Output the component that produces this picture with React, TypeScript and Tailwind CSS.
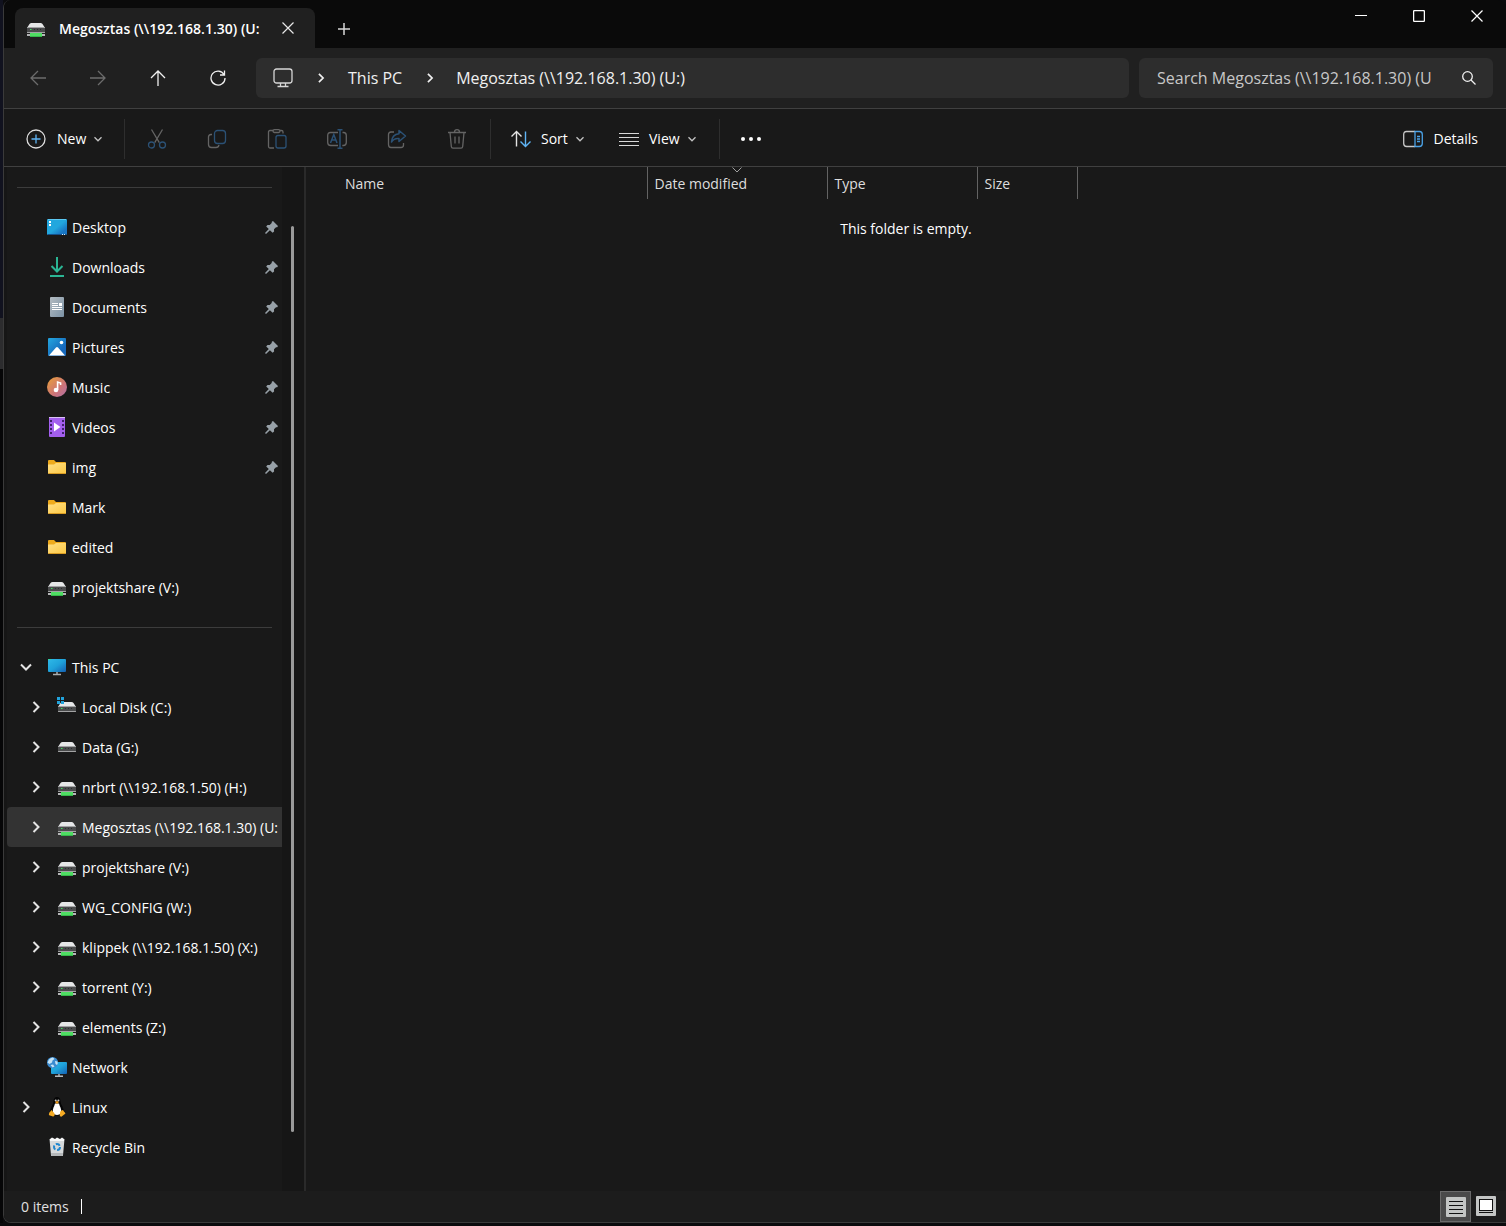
import React from 'react'

type IconType = React.FC

interface TreeItem {
  label: string
  icon: IconType
  pinned?: boolean
  child?: boolean
  caret?: 'open' | 'closed'
  selected?: boolean
}

/* ---------- Sidebar icons ---------- */

const DesktopIcon = () => (
  <svg viewBox="0 0 20 20" className="w-5 h-5">
    <defs>
      <linearGradient id="desk" x1="0" y1="0" x2="1" y2="1">
        <stop offset="0.5" stopColor="#22a7de" />
        <stop offset="0.8" stopColor="#1976c4" />
      </linearGradient>
    </defs>
    <rect x="0" y="2" width="20" height="16" rx="1" fill="url(#desk)" />
    <path d="M1 2.5h18" stroke="#5cc8f2" />
    <path d="M0.5 17.5h19" stroke="#14508a" />
    <path d="M2 4h2v2H2zM2 7h2v2H2z" fill="#fff" />
    <path d="M15 17h1v1h-1zM17 17h1v1h-1z" fill="#d5ecf9" />
  </svg>
)

const DownloadsIcon = () => (
  <svg viewBox="0 0 20 20" className="w-5 h-5" fill="none" stroke="#2bb594" strokeWidth="2">
    <path d="M10 0v14M4.5 9l5.5 5.5L15.5 9M3 19h14" />
  </svg>
)

const DocumentsIcon = () => (
  <svg viewBox="0 0 20 20" className="w-5 h-5">
    <defs>
      <linearGradient id="doc" x1="0" y1="0" x2="1" y2="1">
        <stop offset="0" stopColor="#b4bcc2" />
        <stop offset="1" stopColor="#7b92a5" />
      </linearGradient>
    </defs>
    <rect x="3" y="0" width="14" height="20" rx="1" fill="url(#doc)" />
    <path d="M5 6.5h6M5 8.5h6M5 10.5h10M5 12.5h10" stroke="#fff" />
    <rect x="12" y="6" width="3" height="3" fill="#fff" />
  </svg>
)

const PicturesIcon = () => (
  <svg viewBox="0 0 20 20" className="w-5 h-5">
    <defs>
      <linearGradient id="pic" x1="0" y1="0" x2="1" y2="1">
        <stop offset="0.1" stopColor="#229fdb" />
        <stop offset="0.7" stopColor="#1668bb" />
      </linearGradient>
    </defs>
    <rect x="1" y="1" width="18" height="18" rx="1" fill="url(#pic)" />
    <path d="M2 18.5l7-8q1-1 2 0l7 8z" fill="#fff" />
    <circle cx="14.5" cy="5.5" r="1.8" fill="#fff" />
  </svg>
)

const MusicIcon = () => (
  <svg viewBox="0 0 20 20" className="w-5 h-5">
    <defs>
      <linearGradient id="mus" x1="0" y1="0" x2="1" y2="1">
        <stop offset="0.1" stopColor="#e59a41" />
        <stop offset="0.6" stopColor="#cd7478" />
        <stop offset="1" stopColor="#b070a8" />
      </linearGradient>
    </defs>
    <circle cx="10" cy="10" r="10" fill="url(#mus)" />
    <circle cx="9" cy="13" r="2.3" fill="#fff" />
    <path d="M10.6 13V5l3 1v2" fill="none" stroke="#fff" strokeWidth="1.6" />
  </svg>
)

const VideosIcon = () => (
  <svg viewBox="0 0 20 20" className="w-5 h-5">
    <rect x="2" y="0" width="16" height="20" rx="1" fill="#a35fee" />
    <path d="M2 0.5h16" stroke="#d9c2f5" />
    <path d="M4 3v16M16 3v16" stroke="#40206c" strokeWidth="2" strokeDasharray="2 2" />
    <path d="M7 5.500v9l6.500-4.500z" fill="#fff" />
  </svg>
)

const FolderIcon = () => (
  <svg viewBox="0 0 20 20" className="w-5 h-5">
    <defs>
      <linearGradient id="fold" x1="0" y1="0" x2="1" y2="1">
        <stop offset="0" stopColor="#ffdf87" />
        <stop offset="1" stopColor="#fcc842" />
      </linearGradient>
    </defs>
    <path d="M1 4q0-1 1-1h5l2 2h9q1 0 1 1v3H1z" fill="#eeaa1c" />
    <path d="M1 7.500h6L9 6h10v10q0 1-1 1H2q-1 0-1-1z" fill="url(#fold)" />
    <path d="M1.500 16.500h17" stroke="#d99b22" />
  </svg>
)

const DriveBody = () => (
  <>
    <path d="M1 10l2.500-4q.7-1 2-1h9q1.300 0 2 1L19 10z" fill="#e6e7e8" />
    <rect x="1" y="9" width="18" height="6" rx="0.500" fill="#a2a3a4" />
    <rect x="1" y="10" width="18" height="4" fill="#4a4b4c" />
    <path d="M4 11.500h1.500" stroke="#3ce25b" />
    <path d="M8 11.500h8" stroke="#2b2c2d" strokeDasharray="1 2" />
  </>
)

const DriveIcon = () => (
  <svg viewBox="0 0 20 20" className="w-5 h-5">
    <DriveBody />
  </svg>
)

const SystemDriveIcon = () => (
  <svg viewBox="0 0 20 20" className="w-5 h-5">
    <DriveBody />
    <path d="M0 0h3v3H0zM4 0h3v3H4zM0 4h3v3H0zM4 4h3v3H4z" fill="#21a3dc" />
  </svg>
)

const NetDriveIcon = () => (
  <svg viewBox="0 0 20 20" className="w-5 h-5">
    <DriveBody />
    <path d="M1 17h18" stroke="#d0d1d2" strokeWidth="2" />
    <path d="M1 17h18" stroke="#77787a" strokeWidth="0.600" />
    <path d="M4 15h12v4H4z" fill="#4fdd63" />
    <path d="M4 18.500h12" stroke="#36b84c" />
  </svg>
)

const ThisPcIcon = () => (
  <svg viewBox="0 0 20 20" className="w-5 h-5">
    <defs>
      <linearGradient id="pc" x1="0" y1="0" x2="1" y2="1">
        <stop offset="0" stopColor="#2fb9e8" />
        <stop offset="0.500" stopColor="#1fa2da" />
        <stop offset="1" stopColor="#1560b2" />
      </linearGradient>
    </defs>
    <rect x="1" y="2" width="18" height="13" rx="1" fill="url(#pc)" />
    <path d="M1 2.500h3" stroke="#34d1a4" />
    <path d="M10 15v2M6 17.500h8" stroke="#a8adb0" strokeWidth="1.500" />
  </svg>
)

const NetworkIcon = () => (
  <svg viewBox="0 0 20 20" className="w-5 h-5">
    <rect x="4" y="5" width="16" height="12" rx="1" fill="url(#pc)" />
    <path d="M12 17v2M8 19.200h8" stroke="#b5babd" strokeWidth="1.400" />
    <circle cx="5.500" cy="5.500" r="5.500" fill="#3a8bd0" />
    <path d="M2 2.500Q4 .5 6 .5l1.500 1.500-2 1.500-.5 2L2.500 7 .5 5.500zM8 4l2.500.5q.8 2-.5 3.500L8.500 7zM3.500 8l2.500-.5 1.500 2-2 1z" fill="#c6e4f6" />
  </svg>
)

const LinuxIcon = () => (
  <svg viewBox="0 0 20 20" className="w-5 h-5">
    <path d="M10 0q3.500 0 3.500 4.500 0 2 2 5 1.500 3 1 6l-3 3h-7l-3-3q-.5-3 1-6 2-3 2-5Q6.500 0 10 0z" fill="#050505" />
    <path d="M8 6.500h4q.5 2 1.500 4t.5 5q-1 2.500-4 2.500t-4-2.500q-.5-3 .5-5T8 6.500z" fill="#fff" />
    <circle cx="8.700" cy="3.500" r="1" fill="#ccc" />
    <circle cx="11.400" cy="3.500" r="1" fill="#ccc" />
    <path d="M8 5l2-1 2 1-2 2z" fill="#f5a01b" />
    <path d="M4.500 13l3 3.500q.7 2.500-1.500 3l-3.800-1.200Q1.500 18 2.200 16q.5-1.500 1.200-1.500zM15.300 13l-2 1.500-.6 4q.5 1.500 2 1l3.500-2.700q.6-.5-.5-1.500-1-.5-1-1.500z" fill="#f5ab24" />
  </svg>
)

const RecycleBinIcon = () => (
  <svg viewBox="0 0 20 20" className="w-5 h-5">
    <path d="M2.500 2h15L16 18.500q0 .5-1 .5H5q-1 0-1-.5z" fill="#d6d9db" />
    <path d="M3 2l2-1.500L8 2l2-1.500L13 2l2-1.500L17 2v2H3z" fill="#f6f7f8" />
    <path d="M4 16h12l-.3 3H4.300z" fill="#b4b7b9" />
    <circle cx="10" cy="10" r="3" fill="none" stroke="#1f86cf" strokeWidth="2" strokeDasharray="4.500 1.780" />
  </svg>
)

const PinIcon = () => (
  <svg viewBox="0 0 13 13" className="w-[13px] h-[13px] shrink-0">
    <path d="M8 0l5 5-.8 1.200-1.200.1-2 2 .1 2.200-1.500 1.300L4.900 9.200 1 13l-1-1 3.800-3.900L1.200 5.400l1.300-1.500 2.200.1 2-2 .1-1.200z" fill="#98a1a8" />
  </svg>
)

const Chevron = ({ dir, className }: { dir: 'right' | 'down'; className: string }) => (
  <svg viewBox="0 0 12 12" className={className} fill="none" stroke="currentColor" strokeWidth="2">
    {dir === 'right' ? <path d="M3.500 1l5 5-5 5" /> : <path d="M1 3.500l5 5 5-5" />}
  </svg>
)

const SmallCaret = () => (
  <svg viewBox="0 0 8 8" className="w-2 h-2" fill="none" stroke="#c4c4c4" strokeWidth="1.300">
    <path d="M0.500 2.300L4 5.800l3.500-3.500" />
  </svg>
)

/* ---------- Toolbar icons ---------- */

const GRAY = '#646464'
const BLUE = '#2b5175'

const CutIcon = () => (
  <svg viewBox="0 0 20 20" className="w-5 h-5" fill="none" strokeWidth="1.300">
    <path d="M4.500 0.500l7.800 13.200M15.500 0.500L7.700 13.700" stroke={GRAY} />
    <circle cx="4.500" cy="16" r="3" stroke={BLUE} />
    <circle cx="15.500" cy="16" r="3" stroke={BLUE} />
  </svg>
)

const CopyIcon = () => (
  <svg viewBox="0 0 20 20" className="w-5 h-5" fill="none" strokeWidth="1.300">
    <path d="M5 5.500H4Q1.500 5.500 1.500 8v7.500q0 3 3 3H9q2.500 0 3-2.500" stroke={GRAY} />
    <rect x="7.500" y="1.500" width="11" height="13" rx="3" stroke={BLUE} />
  </svg>
)

const PasteIcon = () => (
  <svg viewBox="0 0 20 20" className="w-5 h-5" fill="none" strokeWidth="1.300">
    <path d="M6 1.500H3Q1.500 1.500 1.500 3v14.500Q1.500 19 3 19h4M13 1.500h1.500Q16 1.500 16 3v1.500" stroke={GRAY} />
    <rect x="6" y="0.700" width="7" height="2.800" rx="1.400" stroke={GRAY} />
    <rect x="9" y="6.500" width="10" height="12.500" rx="2" stroke={BLUE} />
  </svg>
)

const RenameIcon = () => (
  <svg viewBox="0 0 20 20" className="w-5 h-5" fill="none" strokeWidth="1.300">
    <path d="M11 3.500H3.500Q0.700 3.500 0.700 6.500v7q0 3 3 3H11M15.500 3.500h1q2.800 0 2.800 3v7q0 3-3 3h-1" stroke={GRAY} />
    <path d="M3.500 14l3.300-8.500L10 14M4.700 11h4.200M10.500 0.700h5M13 0.700v18.600M10.500 19.300h5" stroke={BLUE} strokeWidth="1.500" />
  </svg>
)

const ShareIcon = () => (
  <svg viewBox="0 0 20 20" className="w-5 h-5" fill="none" strokeWidth="1.300">
    <path d="M7 3H4Q1.500 3 1.500 5.500v10Q1.500 18.500 4 18.500h10q2.500 0 2.500-2.500v-2" stroke={GRAY} />
    <path d="M12 1.500L18.500 7 12 12.500V9.500Q7 9 4.500 13 5 5.500 12 4.800z" stroke={BLUE} strokeLinejoin="round" strokeWidth="1.500" />
  </svg>
)

const DeleteIcon = () => (
  <svg viewBox="0 0 20 20" className="w-5 h-5" fill="none" stroke={GRAY} strokeWidth="1.300">
    <path d="M1 3.500h18M7.500 3q0-2.300 2.500-2.300T12.500 3M3 3.500l1.300 14Q4.500 19.200 6 19.200h8q1.500 0 1.700-1.700L17 3.500M8 7.500v7M12 7.500v7" />
  </svg>
)

const fileActions = [
  { label: 'Cut', icon: CutIcon },
  { label: 'Copy', icon: CopyIcon },
  { label: 'Paste', icon: PasteIcon },
  { label: 'Rename', icon: RenameIcon },
  { label: 'Share', icon: ShareIcon },
  { label: 'Delete', icon: DeleteIcon },
]

const quickAccess: TreeItem[] = [
  { label: 'Desktop', icon: DesktopIcon, pinned: true },
  { label: 'Downloads', icon: DownloadsIcon, pinned: true },
  { label: 'Documents', icon: DocumentsIcon, pinned: true },
  { label: 'Pictures', icon: PicturesIcon, pinned: true },
  { label: 'Music', icon: MusicIcon, pinned: true },
  { label: 'Videos', icon: VideosIcon, pinned: true },
  { label: 'img', icon: FolderIcon, pinned: true },
  { label: 'Mark', icon: FolderIcon },
  { label: 'edited', icon: FolderIcon },
  { label: 'projektshare (V:)', icon: NetDriveIcon },
]

const locations: TreeItem[] = [
  { label: 'This PC', icon: ThisPcIcon, caret: 'open' },
  { label: 'Local Disk (C:)', icon: SystemDriveIcon, child: true, caret: 'closed' },
  { label: 'Data (G:)', icon: DriveIcon, child: true, caret: 'closed' },
  { label: 'nrbrt (\\\\192.168.1.50) (H:)', icon: NetDriveIcon, child: true, caret: 'closed' },
  { label: 'Megosztas (\\\\192.168.1.30) (U:', icon: NetDriveIcon, child: true, caret: 'closed', selected: true },
  { label: 'projektshare (V:)', icon: NetDriveIcon, child: true, caret: 'closed' },
  { label: 'WG_CONFIG (W:)', icon: NetDriveIcon, child: true, caret: 'closed' },
  { label: 'klippek (\\\\192.168.1.50) (X:)', icon: NetDriveIcon, child: true, caret: 'closed' },
  { label: 'torrent (Y:)', icon: NetDriveIcon, child: true, caret: 'closed' },
  { label: 'elements (Z:)', icon: NetDriveIcon, child: true, caret: 'closed' },
  { label: 'Network', icon: NetworkIcon },
  { label: 'Linux', icon: LinuxIcon, caret: 'closed' },
  { label: 'Recycle Bin', icon: RecycleBinIcon },
]

const TreeRow = ({ item }: { item: TreeItem }) => {
  const Icon = item.icon
  return (
    <li
      className={`flex items-center h-10 overflow-hidden ${item.child ? 'pl-[19px]' : 'pl-[9px]'} ${
        item.selected ? 'bg-[#333333] rounded-l-sm' : ''
      }`}
    >
      <span className="w-5 mr-[11px] shrink-0 flex justify-center text-[#e4e4e4]">
        {item.caret && (
          <button type="button" aria-label={`Toggle ${item.label}`}>
            <Chevron dir={item.caret === 'open' ? 'down' : 'right'} className="w-3 h-3" />
          </button>
        )}
      </span>
      <a href="#" className="flex flex-1 items-center gap-[5px] whitespace-nowrap">
        <span className="shrink-0"><Icon /></span>
        <span className="pt-[2px]">{item.label}</span>
      </a>
      {item.pinned && <span className="mr-1"><PinIcon /></span>}
    </li>
  )
}

const TitleBar = () => (
  <header className="flex h-12 bg-[#0a0a0a]">
    <div className="flex items-center w-[300px] h-10 mt-2 ml-[11px] pl-[11px] pr-3 rounded-t-lg bg-[#202020]">
      <NetDriveIcon />
      <span className="ml-[13px] pt-[2px] w-[211px] overflow-hidden whitespace-nowrap font-semibold text-white">
        Megosztas (\\192.168.1.30) (U:
      </span>
      <button type="button" aria-label="Close tab" className="p-3 -mr-1">
        <svg viewBox="0 0 12 12" className="w-3 h-3" stroke="#e8e8e8" strokeWidth="1.200">
          <path d="M0.500 0.500l11 11M11.500 0.500l-11 11" />
        </svg>
      </button>
    </div>
    <button type="button" aria-label="New tab" className="self-end flex items-center justify-center w-10 h-[38px] ml-[9px]">
      <svg viewBox="0 0 12 12" className="w-3 h-3" stroke="#d8d8d8" strokeWidth="1.500">
        <path d="M6 0v12M0 6h12" />
      </svg>
    </button>
    <div className="flex ml-auto h-8 text-white">
      <button type="button" aria-label="Minimize" className="w-[58px] flex items-center justify-center">
        <svg viewBox="0 0 12 12" className="w-3 h-3" stroke="currentColor"><path d="M0 5.500h12" /></svg>
      </button>
      <button type="button" aria-label="Maximize" className="w-[58px] flex items-center justify-center">
        <svg viewBox="0 0 12 12" className="w-3 h-3" fill="none" stroke="currentColor" strokeWidth="1.300">
          <rect x="0.600" y="0.600" width="10.800" height="10.800" rx="1" />
        </svg>
      </button>
      <button type="button" aria-label="Close" className="w-[58px] flex items-center justify-center">
        <svg viewBox="0 0 12 12" className="w-3 h-3" stroke="currentColor" strokeWidth="1.200">
          <path d="M0.500 0.500l11 11M11.500 0.500l-11 11" />
        </svg>
      </button>
    </div>
  </header>
)

const NavBar = () => (
  <nav className="flex items-center h-[61px] pl-1 pr-[13px] bg-[#202020] border-b border-[#404040] text-[#f0f0f0]">
    <button type="button" aria-label="Back" disabled className="w-[60px] flex justify-center text-[#6c6c6c]">
      <svg viewBox="0 0 16 16" className="w-4 h-4" fill="none" stroke="currentColor" strokeWidth="1.300">
        <path d="M16 8H1M8 1L1 8l7 7" />
      </svg>
    </button>
    <button type="button" aria-label="Forward" disabled className="w-[60px] flex justify-center text-[#6c6c6c]">
      <svg viewBox="0 0 16 16" className="w-4 h-4" fill="none" stroke="currentColor" strokeWidth="1.300">
        <path d="M0 8h15M8 1l7 7-7 7" />
      </svg>
    </button>
    <button type="button" aria-label="Up" className="w-[60px] flex justify-center">
      <svg viewBox="0 0 16 16" className="w-4 h-4" fill="none" stroke="currentColor" strokeWidth="1.300">
        <path d="M8 16V1M1 8l7-7 7 7" />
      </svg>
    </button>
    <button type="button" aria-label="Refresh" className="w-[60px] flex justify-center">
      <svg viewBox="0 0 16 16" className="w-4 h-4" fill="none" stroke="currentColor" strokeWidth="1.300">
        <path d="M14 4.500A7 7 0 1 0 15 8M14.500 0.500v4.500H10" />
      </svg>
    </button>

    {/* Breadcrumbs */}
    <div className="flex flex-1 items-center h-10 ml-2 pl-[17px] rounded-md bg-[#2d2d2d] text-base">
      <svg viewBox="0 0 20 20" className="w-5 h-5" fill="none" stroke="#d6d6d6" strokeWidth="1.300">
        <rect x="1" y="1" width="18" height="14" rx="2.500" />
        <path d="M7.500 15v3M12.500 15v3M4.500 18.500h11" />
      </svg>
      <Chevron dir="right" className="w-[10px] h-[10px] ml-[23px]" />
      <a href="#" className="ml-[22px]">This PC</a>
      <Chevron dir="right" className="w-[10px] h-[10px] ml-[23px]" />
      <a href="#" className="ml-[21px]">{'Megosztas (\\\\192.168.1.30) (U:)'}</a>
    </div>

    {/* Search */}
    <div className="flex items-center w-[354px] h-10 ml-[10px] pl-[18px] pr-[17px] rounded-md bg-[#2d2d2d]">
      <input
        type="text"
        aria-label="Search"
        placeholder="Search Megosztas (\\192.168.1.30) (U"
        className="w-[285px] bg-transparent outline-none text-base placeholder:text-[#c8c8c8]"
      />
      <button type="button" aria-label="Run search" className="ml-auto">
        <svg viewBox="0 0 14 14" className="w-[14px] h-[14px]" fill="none" stroke="currentColor" strokeWidth="1.300">
          <circle cx="5.500" cy="5.500" r="4.800" />
          <path d="M9 9l4.500 4.500" />
        </svg>
      </button>
    </div>
  </nav>
)

const Toolbar = () => (
  <div className="flex items-center h-[58px] pt-[2px] bg-[#191919] border-b border-[#404040] text-white">
    <button type="button" className="flex items-center w-[120px] h-10 pl-[22px]">
      <svg viewBox="0 0 20 20" className="w-5 h-5" fill="none">
        <circle cx="10" cy="10" r="9" stroke="#dcdcdc" strokeWidth="1.300" />
        <path d="M10 5.500v9M5.500 10h9" stroke="#5fb4f5" strokeWidth="1.300" />
      </svg>
      <span className="ml-[11px] mr-2">New</span>
      <SmallCaret />
    </button>
    <div className="w-px h-10 bg-[#2e2e2e]" />
    <div className="flex pl-[2px] pr-[3px]">
      {fileActions.map(({ label, icon: Icon }) => (
        <button key={label} type="button" aria-label={label} disabled className="w-[60px] h-10 flex items-center justify-center">
          <Icon />
        </button>
      ))}
    </div>
    <div className="w-px h-10 bg-[#2e2e2e]" />
    <button type="button" className="flex items-center w-[108px] h-10 pl-5">
      <svg viewBox="0 0 20 20" className="w-5 h-5" fill="none" strokeWidth="1.400">
        <path d="M5.500 17.500V2.500M0.500 7.500l5-5 5 5" stroke="#e4e4e4" />
        <path d="M14.500 2.500v15M9.500 12.500l5 5 5-5" stroke="#5fb4f5" />
      </svg>
      <span className="ml-[10px] mr-2">Sort</span>
      <SmallCaret />
    </button>
    <button type="button" className="flex items-center w-[120px] h-10 pl-5">
      <svg viewBox="0 0 20 20" className="w-5 h-5" stroke="#d8d8d8" strokeWidth="1.200">
        <path d="M0 4.500h20M0 8.500h20M0 12.500h20M0 16.500h20" />
      </svg>
      <span className="ml-[10px] mr-2">View</span>
      <SmallCaret />
    </button>
    <div className="w-px h-10 bg-[#2e2e2e]" />
    <button type="button" aria-label="See more" className="w-[61px] h-10 flex items-center justify-center">
      <svg viewBox="0 0 20 20" className="w-5 h-5" fill="#fff">
        <circle cx="2" cy="10" r="2" />
        <circle cx="10" cy="10" r="2" />
        <circle cx="18" cy="10" r="2" />
      </svg>
    </button>
    <button type="button" className="flex items-center gap-[10px] h-10 ml-auto mr-7">
      <svg viewBox="0 0 20 20" className="w-5 h-5" fill="none" strokeWidth="1.300">
        <path d="M12 2.500H3.500Q0.700 2.500 0.700 5.500v9q0 3 3 3H12" stroke="#c8c8c8" />
        <path d="M12 2.500h4.500q2.800 0 2.800 3v9q0 3-3 3H12zM14 7.500h3M14 10h3M14 12.500h3" stroke="#4ba3e8" />
      </svg>
      Details
    </button>
  </div>
)

const Sidebar = () => (
  <aside className="flex w-[302px] pl-[3px] shrink-0 bg-[#161616] border-r-2 border-[#2a2a2a]">
    <div className="w-[275px] pb-6 bg-[#191919] text-white">
      <div className="flex items-center h-10 px-[10px]"><hr className="w-full border-[#3c3c3c]" /></div>
      <ul>
        {quickAccess.map((item) => <TreeRow key={item.label} item={item} />)}
      </ul>
      <div className="flex items-center h-10 px-[10px]"><hr className="w-full border-[#3c3c3c]" /></div>
      <ul>
        {locations.map((item) => <TreeRow key={item.label} item={item} />)}
      </ul>
    </div>
    {/* Scrollbar */}
    <div className="flex-1 flex flex-col pl-[9px] pt-[59px] pb-[59px]">
      <div className="flex-1 w-[3px] rounded-full bg-[#9a9a9a]" />
    </div>
  </aside>
)

const FileList = () => (
  <main className="flex-1 bg-[#191919]">
    <table className="table-fixed text-left text-[#dedede]">
      <thead>
        <tr className="h-8">
          <th className="w-[341px] p-0 pt-[2px] pl-[39px] font-normal border-r border-[#636363]">Name</th>
          <th className="relative w-[180px] p-0 pt-[2px] pl-[7px] font-normal border-r border-[#636363]">
            <svg viewBox="0 0 10 6" className="absolute top-0 left-1/2 -translate-x-1/2 w-[10px] h-[6px]" fill="none" stroke="#a0a0a0">
              <path d="M0.500 0.500L5 5l4.500-4.500" />
            </svg>
            Date modified
          </th>
          <th className="w-[150px] p-0 pt-[2px] pl-[7px] font-normal border-r border-[#636363]">Type</th>
          <th className="w-[100px] p-0 pt-[2px] pl-[7px] font-normal border-r border-[#636363]">Size</th>
        </tr>
      </thead>
    </table>
    <p className="mt-5 text-center text-white">This folder is empty.</p>
  </main>
)

const StatusBar = () => (
  <footer className="flex items-center h-[31px] pl-[17px] bg-[#1c1c1c] text-[#e0e0e0]">
    <span>0 items</span>
    <span className="w-px h-[15px] ml-3 bg-white" />
    <div className="flex ml-auto pr-[5px]">
      <button type="button" aria-label="Details view" className="w-[31px] h-[31px] flex items-center justify-center bg-[#4a4a4a] border border-[#6a6a6a]">
        <svg viewBox="0 0 20 20" className="w-5 h-5">
          <rect width="20" height="20" rx="1" fill="#c3c5c4" />
          <path d="M3 4.500h14M3 8.500h14M3 12.500h14M3 16.500h14" stroke="#111" />
        </svg>
      </button>
      <button type="button" aria-label="Large icons view" className="w-[30px] h-[30px] flex items-center justify-center">
        <svg viewBox="0 0 20 20" className="w-5 h-5">
          <rect width="20" height="20" rx="1" fill="#c3c5c4" />
          <rect x="3.500" y="3.500" width="13" height="11" fill="#fff" stroke="#111" />
          <path d="M3 16.500h14" stroke="#111" />
        </svg>
      </button>
    </div>
  </footer>
)

const App = () => {
  return (
    <div className="min-h-screen flex bg-[#0b0b0d] font-['Open_Sans',sans-serif] text-sm pb-[3px]">
      {/* Desktop edge behind the window */}
      <div className="w-[3px] shrink-0 flex flex-col">
        <div className="h-[318px] bg-[#11121f]" />
        <div className="h-[51px] bg-[#2c2c2e]" />
        <div className="flex-1 bg-[#060607]" />
      </div>
      <div className="flex flex-1 flex-col min-w-0 overflow-hidden rounded-l-lg rounded-tr-lg border-l border-b border-[#3a3a3a]">
        <TitleBar />
        <NavBar />
        <Toolbar />
        <div className="flex flex-1">
          <Sidebar />
          <FileList />
        </div>
        <StatusBar />
      </div>
    </div>
  )
}

export default App
